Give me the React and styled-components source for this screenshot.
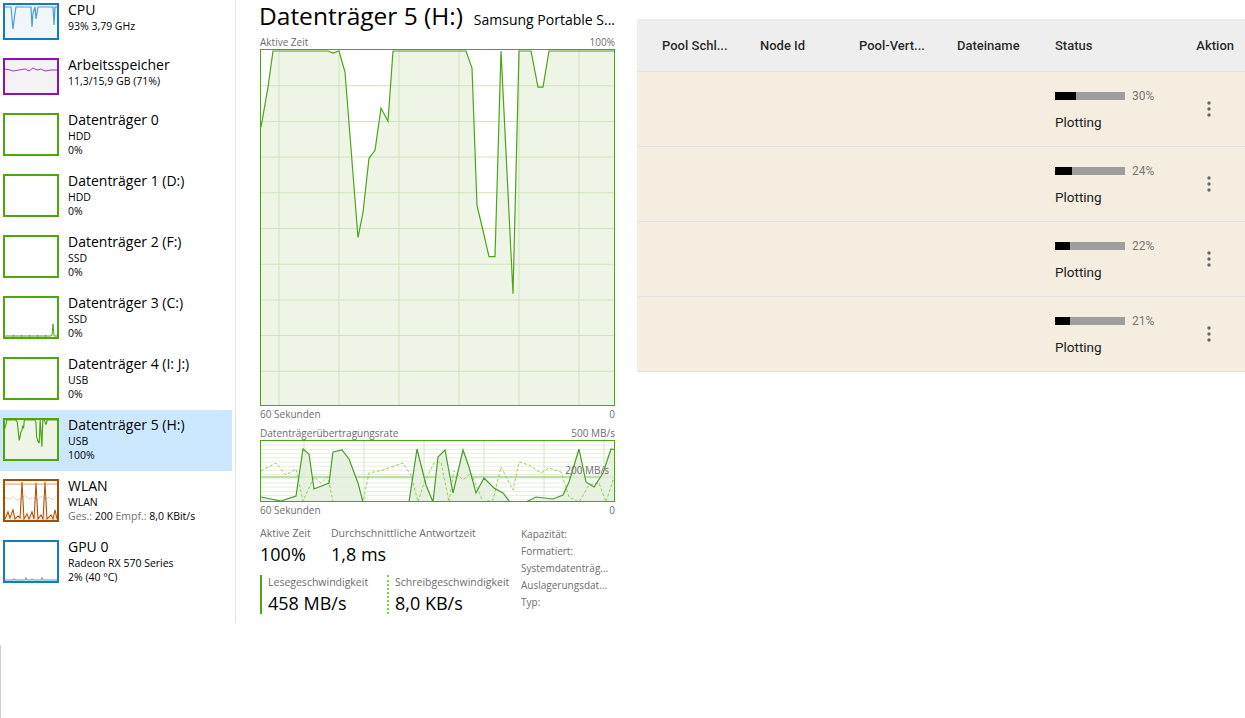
import React from 'react';
import styled, { createGlobalStyle } from 'styled-components';

const Global = createGlobalStyle`
  html, body { margin: 0; padding: 0; background: #ffffff; }
  body { font-family: "Open Sans", "Noto Sans", sans-serif; color: #000; }
  * { box-sizing: border-box; }
`;

const Page = styled.div`
  width: 1245px;
  height: 718px;
  overflow: hidden;
  display: flex;
  flex-direction: column;
`;

const TopRow = styled.div`
  display: flex;
  align-items: flex-start;
`;

const TaskManager = styled.div`
  width: 637px;
  height: 623px;
  display: flex;
  background: #fff;
`;

const Sidebar = styled.div`
  width: 236px;
  height: 100%;
  border-right: 1px solid #e3e3e3;
  overflow: hidden;
`;

const SideList = styled.div`
  margin-top: -5px;
  display: flex;
  flex-direction: column;
`;

const SideItem = styled.div`
  height: ${p => p.$h}px;
  width: 232px;
  display: flex;
  align-items: flex-start;
  gap: 9px;
  padding-left: 3px;
  padding-top: 8px;
  background: ${p => (p.$selected ? '#cce8ff' : 'transparent')};
`;

const Thumb = styled.div`
  width: 56px;
  height: ${p => p.$h}px;
  flex: 0 0 auto;
  border: 2px solid ${p => p.$color};
  background: ${p => p.$bg || '#fff'};
  overflow: hidden;
  svg { display: block; width: 100%; height: 100%; }
`;

const SideText = styled.div`
  display: flex;
  flex-direction: column;
  margin-top: -2px;
`;

const SideTitle = styled.div`
  font-size: 14px;
  line-height: 18px;
  color: #000;
  white-space: nowrap;
`;

const SideSub = styled.div`
  font-size: 10.5px;
  line-height: 14px;
  color: #000;
  white-space: nowrap;
`;

const Muted = styled.span`
  color: #707070;
`;

const Main = styled.div`
  flex: 1;
  padding: 0 22px 0 24px;
  display: flex;
  flex-direction: column;
`;

const TitleRow = styled.div`
  height: 34px;
  display: flex;
  align-items: baseline;
  justify-content: space-between;
  margin-left: -1px;
`;

const Title = styled.div`
  font-size: 24.5px;
  line-height: 32px;
  font-weight: 400;
  color: #000;
  white-space: nowrap;
`;

const SubTitle = styled.div`
  font-size: 14px;
  color: #000;
  white-space: nowrap;
`;

const LabelRow = styled.div`
  height: 15px;
  display: flex;
  justify-content: space-between;
  align-items: flex-end;
  font-size: 10px;
  line-height: 14px;
  color: #6d6d6d;
  margin-top: ${p => p.$mt || 0}px;
`;

const ChartBox = styled.div`
  position: relative;
  width: 355px;
  height: ${p => p.$h}px;
  border: 1px solid #4da60c;
  background: #fff;
  svg { display: block; width: 100%; height: 100%; }
`;

const ChartNote = styled.div`
  position: absolute;
  right: 5px;
  top: 22px;
  font-size: 10px;
  color: #6d6d6d;
`;

const Stats = styled.div`
  margin-top: 9px;
  display: flex;
  gap: 6px;
`;

const StatsLeft = styled.div`
  width: 255px;
  display: flex;
  flex-direction: column;
  gap: 6px;
`;

const StatRow = styled.div`
  display: flex;
`;

const StatBlock = styled.div`
  width: ${p => p.$w}px;
  height: ${p => (p.$bar ? '39px' : 'auto')};
  padding-left: ${p => (p.$bar ? 6 : 0)}px;
  border-left: ${p => (p.$bar === 'solid' ? '2px solid #4da60c' : p.$bar === 'dotted' ? '2px dotted #7ad53a' : 'none')};
  display: flex;
  flex-direction: column;
`;

const StatLabel = styled.div`
  font-size: 10.5px;
  line-height: 14px;
  color: #6d6d6d;
  white-space: nowrap;
`;

const StatValue = styled.div`
  font-size: 18px;
  line-height: 29px;
  color: #000;
  white-space: nowrap;
`;

const Props = styled.div`
  display: flex;
  flex-direction: column;
`;

const PropLine = styled.div`
  font-size: 10px;
  line-height: 17px;
  color: #6d6d6d;
  white-space: nowrap;
`;

/* ---------- table ---------- */

const TableArea = styled.div`
  width: 608px;
  padding-top: 19px;
  font-family: Roboto, "Noto Sans", sans-serif;
`;

const HeadRow = styled.div`
  height: 53px;
  background: #eeeeee;
  display: grid;
  grid-template-columns: 98px 99px 98px 98px 140px 1fr;
  align-items: center;
  padding-left: 25px;
  border-bottom: 1px solid #e2e0e8;
`;

const HeadCell = styled.div`
  font-size: 13px;
  font-weight: 500;
  color: rgba(0, 0, 0, 0.85);
  white-space: nowrap;
  justify-self: ${p => (p.$end ? 'end' : 'start')};
  padding-right: ${p => (p.$end ? 11 : 0)}px;
`;

const Row = styled.div`
  height: 75px;
  background: #f5eee0;
  display: grid;
  grid-template-columns: 98px 99px 98px 98px 140px 1fr;
  align-items: center;
  padding-left: 25px;
  border-bottom: 1px solid #e2e0e8;
`;

const StatusCell = styled.div`
  grid-column: 5;
  display: flex;
  flex-direction: column;
  gap: 12px;
  padding-top: 2px;
`;

const ProgressLine = styled.div`
  display: flex;
  align-items: center;
  gap: 7px;
  height: 12px;
`;

const Bar = styled.div`
  width: 70px;
  height: 8px;
  background: #9e9e9e;
`;

const BarFill = styled.div`
  height: 100%;
  background: #000;
`;

const Pct = styled.span`
  font-size: 12px;
  color: #757575;
`;

const StatusText = styled.div`
  font-size: 13.5px;
  color: #212121;
`;

const ActionCell = styled.div`
  grid-column: 6;
  display: flex;
  justify-content: flex-end;
  padding-right: 33px;
`;

const Kebab = styled.svg`
  width: 6px;
  height: 16px;
  display: block;
`;

const EdgeLine = styled.div`
  margin-top: 22px;
  width: 1px;
  height: 73px;
  background: #d0d0d0;
`;

/* ---------- chart data ---------- */

const pts = a => a.map(p => p.join(',')).join(' ');

const mainLine = [
  [0, 77], [7, 37], [12, 1], [67, 1], [72, 3], [78, 1], [84, 22], [97, 187], [102, 162],
  [108, 108], [114, 100], [120, 58], [127, 71], [132, 1], [205, 1], [211, 18], [216, 155],
  [222, 180], [228, 206], [234, 206], [240, 1], [252, 243], [258, 1], [270, 1], [277, 37],
  [282, 37], [288, 1], [355, 1],
];

const readLine = [
  [0, 56], [20, 60], [35, 55], [42, 8], [48, 13], [53, 48], [68, 42], [72, 11], [81, 9],
  [88, 18], [97, 42], [102, 61], [148, 61], [156, 8], [165, 44], [172, 61], [177, 16],
  [184, 9], [192, 52], [202, 9], [208, 26], [215, 52], [223, 37], [233, 47], [242, 52],
  [249, 61], [265, 61], [275, 56], [292, 58], [302, 54], [308, 41], [318, 8], [325, 41],
  [333, 46], [342, 32], [350, 8], [355, 9],
];

const writeLine = [
  [0, 30], [15, 22], [25, 34], [35, 28], [42, 60], [53, 36], [60, 42], [67, 36], [72, 61],
  [102, 61], [108, 32], [122, 29], [142, 22], [150, 34], [157, 61], [163, 42], [173, 22],
  [180, 21], [188, 61], [193, 30], [202, 39], [210, 32], [222, 61], [232, 59], [240, 26],
  [252, 49], [258, 21], [268, 24], [280, 32], [288, 27], [300, 31], [308, 56], [318, 61],
  [328, 44], [338, 42], [345, 61], [352, 39], [355, 40],
];

function MainChart() {
  const vx = [18, 78, 138, 198, 258, 318];
  const hy = Array.from({ length: 9 }, (_, i) => (i + 1) * 35.6);
  return (
    <svg viewBox="0 0 353 354" preserveAspectRatio="none">
      <rect x="0" y="0" width="353" height="354" fill="#fff" />
      <polygon points={pts([...mainLine, [355, 356], [0, 356]])} fill="#eef5e6" />
      {vx.map(x => <line key={'v' + x} x1={x} y1="0" x2={x} y2="354" stroke="#cfe3bd" strokeWidth="1" />)}
      {hy.map(y => <line key={'h' + y} x1="0" y1={y} x2="353" y2={y} stroke="#cfe3bd" strokeWidth="1" />)}
      <polyline points={pts(mainLine)} fill="none" stroke="#4ea319" strokeWidth="1.2" />
    </svg>
  );
}

function RateChart() {
  const vx = [43, 103, 163, 223, 283, 343];
  const hy = Array.from({ length: 14 }, (_, i) => (i + 1) * 4.2);
  return (
    <svg viewBox="0 0 353 60" preserveAspectRatio="none">
      <rect x="0" y="0" width="353" height="60" fill="#fff" />
      {hy.map(y => <line key={'h' + y} x1="0" y1={y} x2="353" y2={y} stroke="#dcebd0" strokeWidth="0.8" />)}
      {vx.map(x => <line key={'v' + x} x1={x} y1="0" x2={x} y2="60" stroke="#d3e6c4" strokeWidth="1" />)}
      <line x1="0" y1="36" x2="353" y2="36" stroke="#a9d18b" strokeWidth="1.6" />
      <polygon points={pts([...readLine, [355, 62], [0, 62]])} fill="#e4efdb" opacity="0.8" />
      <polyline points={pts(writeLine)} fill="none" stroke="#8fd14f" strokeWidth="1" strokeDasharray="3 2" />
      <polyline points={pts(readLine)} fill="none" stroke="#4c9a2a" strokeWidth="1.2" />
    </svg>
  );
}

function ThumbGraph({ kind }) {
  if (kind === 'cpu') {
    const l = [[0, 2], [6, 2], [8, 24], [10, 8], [11, 2], [26, 2], [27, 22], [28, 8], [30, 2], [31, 14], [33, 2], [48, 2], [49, 20], [50, 2], [56, 2]];
    return (
      <svg viewBox="0 0 52 33" preserveAspectRatio="none">
        <polygon points={pts([...l, [56, 40], [0, 40]])} fill="#f1f6fa" />
        <polyline points={pts(l)} fill="none" stroke="#4a9fd8" strokeWidth="1.2" />
      </svg>
    );
  }
  if (kind === 'mem') {
    const l = [[0, 9], [5, 10], [8, 11], [14, 10], [20, 9], [24, 11], [28, 8], [32, 10], [36, 9], [40, 11], [46, 10], [52, 10]];
    return (
      <svg viewBox="0 0 52 33" preserveAspectRatio="none">
        <polygon points={pts([...l, [52, 40], [0, 40]])} fill="#f4f2f4" />
        <polyline points={pts(l)} fill="none" stroke="#9b3fb5" strokeWidth="1" />
      </svg>
    );
  }
  if (kind === 'disk3') {
    return (
      <svg viewBox="0 0 52 39" preserveAspectRatio="none">
        <polyline points="0,38 46,38 47,37 48,26 49,38 52,38" fill="none" stroke="#4ea319" strokeWidth="1" />
        {[8, 16, 24, 32, 40].map(x => <rect key={x} x={x} y="37" width="1" height="1.5" fill="#4ea319" />)}
      </svg>
    );
  }
  if (kind === 'disk5') {
    return (
      <svg viewBox="0 0 355 356" preserveAspectRatio="none">
        <polygon points={pts([...mainLine, [355, 356], [0, 356]])} fill="#eef5e6" />
        <polyline points={pts(mainLine)} fill="none" stroke="#4ea319" strokeWidth="8" />
      </svg>
    );
  }
  if (kind === 'wlan') {
    const l = [[0, 37], [3, 30], [5, 36], [8, 28], [10, 37], [13, 34], [15, 36], [17, 1], [19, 37], [22, 32], [24, 37], [27, 30], [29, 37], [31, 2], [33, 37], [36, 33], [38, 37], [40, 1], [42, 37], [46, 33], [48, 37], [50, 28], [52, 37]];
    const d = [[0, 16], [4, 18], [8, 15], [12, 19], [16, 17], [20, 14], [24, 18], [28, 16], [32, 19], [36, 15], [40, 17], [44, 16], [48, 18], [52, 14]];
    return (
      <svg viewBox="0 0 52 38" preserveAspectRatio="none">
        <line x1="0" y1="3" x2="52" y2="3" stroke="#c98a58" strokeWidth="0.8" />
        <polygon points={pts([...l, [52, 40], [0, 40]])} fill="#f5e9df" />
        <polyline points={pts(d)} fill="none" stroke="#e0a07a" strokeWidth="0.8" strokeDasharray="1.5 1" />
        <polyline points={pts(l)} fill="none" stroke="#a74f01" strokeWidth="1" />
      </svg>
    );
  }
  if (kind === 'gpu') {
    return (
      <svg viewBox="0 0 52 38" preserveAspectRatio="none">
        <polyline points="0,37 8,37 9,36 10,37 20,37 21,35 22,37 26,37 27,36 28,37 36,37 37,35 38,37 52,37" fill="none" stroke="#4a9fd8" strokeWidth="1" />
      </svg>
    );
  }
  return null;
}

const sideItems = [
  { title: 'CPU', lines: ['93% 3,79 GHz'], kind: 'cpu', color: '#117dbb', bg: '#f1f6fa', th: 37, h: 55 },
  { title: 'Arbeitsspeicher', lines: ['11,3/15,9 GB (71%)'], kind: 'mem', color: '#8b12ae', bg: '#f4f2f4', th: 37, h: 55 },
  { title: 'Datenträger 0', lines: ['HDD', '0%'], kind: 'none', color: '#4da60c', th: 43, h: 61 },
  { title: 'Datenträger 1 (D:)', lines: ['HDD', '0%'], kind: 'none', color: '#4da60c', th: 43, h: 61 },
  { title: 'Datenträger 2 (F:)', lines: ['SSD', '0%'], kind: 'none', color: '#4da60c', th: 43, h: 61 },
  { title: 'Datenträger 3 (C:)', lines: ['SSD', '0%'], kind: 'disk3', color: '#4da60c', th: 43, h: 61 },
  { title: 'Datenträger 4 (I: J:)', lines: ['USB', '0%'], kind: 'none', color: '#4da60c', th: 43, h: 61 },
  { title: 'Datenträger 5 (H:)', lines: ['USB', '100%'], kind: 'disk5', color: '#4da60c', bg: '#eef5e6', th: 43, h: 61, selected: true },
  {
    title: 'WLAN',
    lines: ['WLAN', <><Muted>Ges.:</Muted> 200 <Muted>Empf.:</Muted> 8,0 KBit/s</>],
    kind: 'wlan', color: '#a74f01', th: 43, h: 61,
  },
  { title: 'GPU 0', lines: ['Radeon RX 570 Series', '2% (40 °C)'], kind: 'gpu', color: '#117dbb', th: 43, h: 61 },
];

const rows = [30, 24, 22, 21];

export default function App() {
  return (
    <Page>
      <Global />
      <TopRow>
        <TaskManager>
          <Sidebar>
            <SideList>
              {sideItems.map((it, i) => (
                <SideItem key={i} $h={it.h} $selected={it.selected}>
                  <Thumb $h={it.th} $color={it.color} $bg={it.bg}>
                    <ThumbGraph kind={it.kind} />
                  </Thumb>
                  <SideText>
                    <SideTitle>{it.title}</SideTitle>
                    {it.lines.map((l, j) => <SideSub key={j}>{l}</SideSub>)}
                  </SideText>
                </SideItem>
              ))}
            </SideList>
          </Sidebar>
          <Main>
            <TitleRow>
              <Title>Datenträger 5 (H:)</Title>
              <SubTitle>Samsung Portable S...</SubTitle>
            </TitleRow>
            <LabelRow>
              <span>Aktive Zeit</span>
              <span>100%</span>
            </LabelRow>
            <ChartBox $h={357}>
              <MainChart />
            </ChartBox>
            <LabelRow>
              <span>60 Sekunden</span>
              <span>0</span>
            </LabelRow>
            <LabelRow $mt={4}>
              <span>Datenträgerübertragungsrate</span>
              <span>500 MB/s</span>
            </LabelRow>
            <ChartBox $h={62}>
              <RateChart />
              <ChartNote>200 MB/s</ChartNote>
            </ChartBox>
            <LabelRow>
              <span>60 Sekunden</span>
              <span>0</span>
            </LabelRow>
            <Stats>
              <StatsLeft>
                <StatRow>
                  <StatBlock $w={71}>
                    <StatLabel>Aktive Zeit</StatLabel>
                    <StatValue>100%</StatValue>
                  </StatBlock>
                  <StatBlock $w={184}>
                    <StatLabel>Durchschnittliche Antwortzeit</StatLabel>
                    <StatValue>1,8 ms</StatValue>
                  </StatBlock>
                </StatRow>
                <StatRow>
                  <StatBlock $w={127} $bar="solid">
                    <StatLabel>Lesegeschwindigkeit</StatLabel>
                    <StatValue>458 MB/s</StatValue>
                  </StatBlock>
                  <StatBlock $w={128} $bar="dotted">
                    <StatLabel>Schreibgeschwindigkeit</StatLabel>
                    <StatValue>8,0 KB/s</StatValue>
                  </StatBlock>
                </StatRow>
              </StatsLeft>
              <Props>
                <PropLine>Kapazität:</PropLine>
                <PropLine>Formatiert:</PropLine>
                <PropLine>Systemdatenträg...</PropLine>
                <PropLine>Auslagerungsdat...</PropLine>
                <PropLine>Typ:</PropLine>
              </Props>
            </Stats>
          </Main>
        </TaskManager>
        <TableArea>
          <HeadRow>
            <HeadCell>Pool Schl...</HeadCell>
            <HeadCell>Node Id</HeadCell>
            <HeadCell>Pool-Vert...</HeadCell>
            <HeadCell>Dateiname</HeadCell>
            <HeadCell>Status</HeadCell>
            <HeadCell $end>Aktion</HeadCell>
          </HeadRow>
          {rows.map((p, i) => (
            <Row key={i}>
              <StatusCell>
                <ProgressLine>
                  <Bar>
                    <BarFill style={{ width: `${p}%` }} />
                  </Bar>
                  <Pct>{p}%</Pct>
                </ProgressLine>
                <StatusText>Plotting</StatusText>
              </StatusCell>
              <ActionCell>
                <Kebab viewBox="0 0 6 16">
                  <circle cx="3" cy="2" r="1.7" fill="#666" />
                  <circle cx="3" cy="8" r="1.7" fill="#666" />
                  <circle cx="3" cy="14" r="1.7" fill="#666" />
                </Kebab>
              </ActionCell>
            </Row>
          ))}
        </TableArea>
      </TopRow>
      <EdgeLine />
    </Page>
  );
}
